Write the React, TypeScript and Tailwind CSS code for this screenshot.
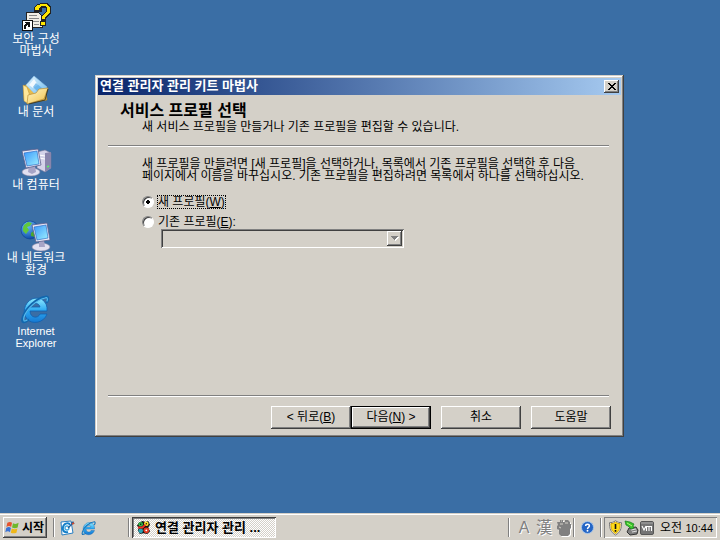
import { useState, type ReactNode } from "react";

const RAISED =
  "shadow-[inset_-1px_-1px_0_#404040,inset_1px_1px_0_#ffffff,inset_-2px_-2px_0_#808080]";

const App = () => {
  return (
    <div className="flex min-h-screen flex-col bg-[#3a6ea5] font-['Liberation_Sans','Noto_Sans_CJK_KR',sans-serif] text-xs leading-3 text-black">
      <main className="grid flex-1 grid-cols-[72px_1fr_72px]">
        <nav className="flex flex-col">
          <DesktopIcon icon={<SecurityIcon />}>
            보안 구성
            <br />
            마법사
          </DesktopIcon>
          <DesktopIcon icon={<FolderIcon />}>내 문서</DesktopIcon>
          <DesktopIcon icon={<ComputerIcon />}>내 컴퓨터</DesktopIcon>
          <DesktopIcon icon={<NetworkIcon />}>
            내 네트워크
            <br />
            환경
          </DesktopIcon>
          <DesktopIcon icon={<ExplorerIcon size={32} />}>
            <span className="text-[11px]">
              Internet
              <br />
              Explorer
            </span>
          </DesktopIcon>
        </nav>
        <div className="flex items-center justify-center pr-px pb-0.5">
          <WizardDialog />
        </div>
      </main>
      <Taskbar />
    </div>
  );
};

function DesktopIcon({ icon, children }: { icon: ReactNode; children: ReactNode }) {
  return (
    <a href="#" className="flex h-[73px] flex-col items-center pt-px text-center whitespace-nowrap text-white">
      {icon}
      <span>{children}</span>
    </a>
  );
}

function WizardDialog() {
  const [choice, setChoice] = useState("new");

  return (
    <section
      role="dialog"
      aria-labelledby="wizard-title"
      className="flex w-full max-w-[529px] flex-col bg-[#d4d0c8] p-[3px] shadow-[inset_-1px_-1px_0_#404040,inset_1px_1px_0_#d4d0c8,inset_-2px_-2px_0_#808080,inset_2px_2px_0_#ffffff]"
    >
      <header className="flex h-[17px] items-center justify-between bg-linear-to-r from-[#0a246a] to-[#a6caf0] px-0.5">
        <h1 id="wizard-title" className="text-[13px] font-bold text-white">
          연결 관리자 관리 키트 마법사
        </h1>
        <button
          aria-label="닫기"
          className={`flex h-[13px] w-[15px] items-center justify-center bg-[#d4d0c8] ${RAISED}`}
        >
          <svg width="8" height="7" viewBox="0 0 8 7" shapeRendering="crispEdges">
            <path
              d="M0 0h2v1h1v1h2V1h1V0h2v1H7v1H6v1H5v1h1v1h1v1h1v1H6V6H5V5H3v1H2v1H0V6h1V5h1V4h1V3H2V2H1V1H0z"
              fill="#000"
            />
          </svg>
        </button>
      </header>

      <div className="px-[10px] pt-2 pb-[5px]">
        <div className="px-3">
          <h2 className="text-base leading-4 font-bold">서비스 프로필 선택</h2>
          <p className="pt-0.5 pl-[22px]">새 서비스 프로필을 만들거나 기존 프로필을 편집할 수 있습니다.</p>
        </div>
        <hr className="mt-3 mr-0.5 border-t border-b border-t-[#808080] border-b-white" />

        <div className="min-h-[248px] pt-[11px] pl-[34px]">
          <p className="whitespace-nowrap">
            새 프로필을 만들려면 [새 프로필]을 선택하거나, 목록에서 기존 프로필을 선택한 후 다음
            <br />
            페이지에서 이름을 바꾸십시오. 기존 프로필을 편집하려면 목록에서 하나를 선택하십시오.
          </p>
          <div className="mt-[13px] flex flex-col gap-1.5">
            <RadioRow id="new" checked={choice === "new"} onSelect={setChoice}>
              새 프로필(<u>W</u>)
            </RadioRow>
            <RadioRow id="existing" checked={choice === "existing"} onSelect={setChoice}>
              기존 프로필(<u>E</u>):
            </RadioRow>
          </div>
          <div className="relative ml-[19px] h-[19px] w-[243px]">
            <select
              disabled={choice === "new"}
              aria-label="기존 프로필"
              className="h-full w-full appearance-none bg-[#d4d0c8] px-1 shadow-[inset_1px_1px_0_#808080,inset_-1px_-1px_0_#ffffff,inset_2px_2px_0_#404040,inset_-2px_-2px_0_#d4d0c8]"
            />
            <span
              className={`pointer-events-none absolute top-0.5 right-0.5 flex h-[15px] w-[15px] items-center justify-center bg-[#d4d0c8] ${RAISED}`}
            >
              <svg width="8" height="5" viewBox="0 0 8 5" shapeRendering="crispEdges">
                <path d="M1 1h7v1H7v1H6v1H5v1H4V4H3V3H2V2H1z" fill="#fff" />
                <path d="M0 0h7v1H6v1H5v1H4v1H3V3H2V2H1V1H0z" fill="#808080" />
              </svg>
            </span>
          </div>
        </div>

        <hr className="mr-0.5 border-t border-b border-t-[#808080] border-b-white" />
        <footer className="mt-[9px] flex justify-end gap-[10px]">
          <div className="flex">
            <WizardButton>
              &lt; 뒤로(<u>B</u>)
            </WizardButton>
            <WizardButton primary>
              다음(<u>N</u>) &gt;
            </WizardButton>
          </div>
          <WizardButton>취소</WizardButton>
          <WizardButton>도움말</WizardButton>
        </footer>
      </div>
    </section>
  );
}

function RadioRow({
  id,
  checked,
  onSelect,
  children,
}: {
  id: string;
  checked: boolean;
  onSelect: (id: string) => void;
  children: ReactNode;
}) {
  return (
    <div className="flex h-[14px] items-center gap-[3px]">
      <input
        type="radio"
        id={id}
        name="profile"
        checked={checked}
        onChange={() => onSelect(id)}
        className="h-3 w-3 appearance-none rounded-full border border-t-[#808080] border-r-white border-b-white border-l-[#808080] bg-white shadow-[inset_1px_1px_0_#404040] checked:bg-[radial-gradient(circle,#000_2px,#fff_2px)]"
      />
      <label
        htmlFor={id}
        className={`border border-dotted leading-3 ${checked ? "border-black" : "border-transparent"}`}
      >
        {children}
      </label>
    </div>
  );
}

function WizardButton({ primary, children }: { primary?: boolean; children: ReactNode }) {
  return (
    <button
      className={`h-[23px] w-20 bg-[#d4d0c8] pb-px whitespace-nowrap ${
        primary
          ? "shadow-[inset_0_0_0_1px_#000000,inset_-2px_-2px_0_#404040,inset_2px_2px_0_#ffffff,inset_-3px_-3px_0_#808080]"
          : RAISED
      }`}
    >
      {children}
    </button>
  );
}

function Taskbar() {
  return (
    <footer className="flex h-[27px] items-center bg-[#d4d0c8] px-[3px] pt-0.5 shadow-[inset_0_1px_0_#d4d0c8,inset_0_2px_0_#ffffff]">
      <button className={`flex h-[21px] w-11 items-center gap-0.5 pl-0.5 font-bold ${RAISED}`}>
        <WindowsFlag />
        <span className="whitespace-nowrap">시작</span>
      </button>
      <Grip className="ml-1.5" />
      <div className="ml-0.5 flex w-[67px] items-center gap-1.5">
        <button aria-label="Outlook Express">
          <OutlookIcon />
        </button>
        <button aria-label="Internet Explorer">
          <ExplorerIcon size={16} />
        </button>
      </div>
      <Grip />
      <button className="flex h-[21px] w-36 items-center gap-1 bg-[repeating-conic-gradient(#ffffff_0_25%,#d4d0c8_0_50%)] bg-[length:2px_2px] pl-1 text-[13px] font-bold whitespace-nowrap shadow-[inset_1px_1px_0_#404040,inset_-1px_-1px_0_#ffffff,inset_2px_2px_0_#808080]">
        <WizardIcon />
        연결 관리자 관리 ...
      </button>

      <div className="ml-auto flex items-center">
        <Grip />
        <div className="ml-1 flex items-center gap-1 text-[#808080]">
          <button className="w-4 text-base leading-5 [text-shadow:1px_1px_0_#fff]">A</button>
          <button className="w-4 text-base leading-5 [text-shadow:1px_1px_0_#fff]">漢</button>
          <button aria-label="IME 패드">
            <ImePadIcon />
          </button>
        </div>
        <Grip className="ml-px" />
        <button aria-label="도움말" className="mx-1">
          <HelpIcon />
        </button>
        <Grip />
        <div className="flex h-[21px] items-center pr-1 pl-1 shadow-[inset_1px_1px_0_#808080,inset_-1px_-1px_0_#ffffff]">
          <ShieldIcon />
          <UnplugIcon />
          <VmIcon />
          <time className="ml-1.5 whitespace-nowrap">
            오전 <span className="text-[11px]">10:44</span>
          </time>
        </div>
      </div>
    </footer>
  );
}

function Grip({ className = "" }: { className?: string }) {
  return <i className={`mx-0.5 h-[19px] w-0.5 border-r border-l border-r-white border-l-[#808080] ${className}`} />;
}

function SecurityIcon() {
  return (
    <svg width="32" height="32" viewBox="0 0 32 32" shapeRendering="crispEdges">
      <path d="M6 11h12l4 4v11H6z" fill="#f2efe6" stroke="#222" />
      <path d="M9 14h8M9 17h10M9 20h10M14 23h5" stroke="#888" />
      <path d="M14 11V6l3-3 5-1h5l4 3v7l-5 5v3h-5v-5l5-4V7h-4v4z" fill="#222" />
      <path d="M15 9V6l3-2 4-1h4l4 3v5l-5 5v2h-3v-3l5-4V6l-2-1h-4l-2 2v2z" fill="#ffe600" />
      <path d="M20 20h6v5h-6z" fill="#222" />
      <path d="M21 21h4v3h-4z" fill="#ffe600" />
      <path d="M2 19h10v10H2z" fill="#fff" stroke="#111" />
      <path d="M5 21h5v5H8v-2H7v1H6v3H4v-4h1v-1h1v-1H5z" fill="#111" />
    </svg>
  );
}

function FolderIcon() {
  return (
    <svg width="32" height="32" viewBox="0 0 32 32">
      <defs>
        <linearGradient id="folder" x1="0" y1="0" x2="1" y2="1">
          <stop offset="0" stopColor="#fff7c8" />
          <stop offset="1" stopColor="#f0c04a" />
        </linearGradient>
        <linearGradient id="sheet" x1="0" y1="0" x2="1" y2="1">
          <stop offset="0" stopColor="#e6f6ff" />
          <stop offset="1" stopColor="#62b5ed" />
        </linearGradient>
      </defs>
      <path d="M4 12l5-3 3 2 13 3 2 12-20 3-3-4z" fill="#e6bd50" stroke="#a67b21" strokeWidth=".7" />
      <path d="M14 2l13 11-8 11L6 11z" fill="url(#sheet)" stroke="#8fc4eb" strokeWidth=".6" />
      <path d="M14 5l4 6-5 3-4-3z" fill="#fff" opacity=".8" />
      <path d="M16 9l6 5-4 4-5-5z" fill="#55a9e8" opacity=".7" />
      <path d="M3 11l4 2 4 12-4 4-3-2z" fill="#ffe799" stroke="#b98e35" strokeWidth=".5" />
      <path d="M8 21l8-2 3-4 9-1-4 11-17 5z" fill="url(#folder)" stroke="#b98e35" strokeWidth=".7" />
      <path d="M28 15l-3 11-16 4" fill="none" stroke="#403718" strokeWidth=".9" />
    </svg>
  );
}

function ComputerIcon() {
  return (
    <svg width="32" height="32" viewBox="0 0 32 32">
      <defs>
        <linearGradient id="screen" x1="0" y1="0" x2="1" y2="1">
          <stop offset="0" stopColor="#3b98fb" />
          <stop offset="1" stopColor="#9cf0ff" />
        </linearGradient>
      </defs>
      <path d="M17 5l8-2 6 3v15l-6 4-8-4z" fill="#d4d3e9" stroke="#777595" strokeWidth=".6" />
      <path d="M25 6l6-1v16l-6 4z" fill="#8885ac" />
      <path d="M19 8l6 1M19 11l6 1" stroke="#fff" />
      <path d="M27 20l2-1" stroke="#56ef65" strokeWidth="1.500" />
      <ellipse cx="11" cy="25" rx="9" ry="4" fill="#e2e0f0" stroke="#8482a0" strokeWidth=".6" />
      <path d="M9 19h6l1 6-4 2-4-2z" fill="#a7a4c6" />
      <path d="M2 4l16-2 3 16-15 3z" fill="#e9e9f8" stroke="#5b608d" strokeWidth=".8" />
      <path d="M4 6l13-2 2 13-12 2z" fill="url(#screen)" stroke="#1d5fbd" strokeWidth=".6" />
    </svg>
  );
}

function NetworkIcon() {
  return (
    <svg width="32" height="32" viewBox="0 0 32 32">
      <defs>
        <radialGradient id="globe" cx=".35" cy=".25" r=".8">
          <stop offset="0" stopColor="#70bfff" />
          <stop offset="1" stopColor="#0846a3" />
        </radialGradient>
        <linearGradient id="netScreen" x1="0" y1="0" x2="1" y2="1">
          <stop offset="0" stopColor="#3b98fb" />
          <stop offset="1" stopColor="#9cf0ff" />
        </linearGradient>
      </defs>
      <circle cx="10" cy="10" r="9" fill="url(#globe)" stroke="#0a3f91" strokeWidth=".6" />
      <path d="M4 5l4-3 4 1-2 3-3 1 2 3-3 4-3-3v-3z" fill="#62c83b" />
      <path d="M11 13l4-3 3 3-3 4-4-1z" fill="#49a82f" />
      <ellipse cx="21" cy="27" rx="9" ry="4" fill="#e2e0f0" stroke="#8482a0" strokeWidth=".6" />
      <path d="M19 20h5l1 7h-6z" fill="#a7a4c6" />
      <path d="M12 5l15-2 3 17-14 2z" fill="#e9e9f8" stroke="#5b608d" strokeWidth=".8" />
      <path d="M14 7l12-2 2 13-11 2z" fill="url(#netScreen)" stroke="#1d5fbd" strokeWidth=".6" />
    </svg>
  );
}

function ExplorerIcon({ size }: { size: number }) {
  return (
    <svg width={size} height={size} viewBox="0 0 32 32">
      <defs>
        <linearGradient id="explorer" x1="0" y1="0" x2="0" y2="1">
          <stop offset="0" stopColor="#8eeaff" />
          <stop offset=".5" stopColor="#2eaaf2" />
          <stop offset="1" stopColor="#1578d2" />
        </linearGradient>
      </defs>
      <path
        d="M27 18H10c0 7 8 8 10 3h7c-3 9-15 11-20 5C2 20 4 10 12 6c8-3 16 2 15 12zM10 14h10c-1-5-9-5-10 0z"
        fill="url(#explorer)"
        fillRule="evenodd"
        stroke="#105faf"
        strokeWidth=".8"
      />
      <path
        d="M27 9c2-4 1-6-2-5C17 5 6 15 3 24c-2 6 1 6 5 3"
        fill="none"
        stroke="#1267ae"
        strokeWidth="2.500"
        strokeLinecap="round"
      />
      <path
        d="M27 8c1-3 0-4-2-3C17 7 7 15 4 24c-1 4 0 5 3 3"
        fill="none"
        stroke="#58bdf0"
        strokeWidth="1.200"
        strokeLinecap="round"
      />
    </svg>
  );
}

function WindowsFlag() {
  return (
    <svg width="15" height="15" viewBox="0 0 16 16">
      <path d="M2.500 3q3-2 5 0l-1 4.500q-2-2-5 0z" fill="#e6532c" />
      <path d="M8.500 3.500q3 1.500 6-.5l-1 5q-3 1.500-6 0z" fill="#6eb82a" />
      <path d="M1.300 8.500q3-2 5 0l-1 4.500q-2-2-5 0z" fill="#3972d5" />
      <path d="M7.200 9q3 1.500 6 0l-1 4.500q-3 1.500-6 0z" fill="#efb718" />
    </svg>
  );
}

function OutlookIcon() {
  return (
    <svg width="16" height="16" viewBox="0 0 16 16">
      <path d="M2 2l10-1 2 12-11 2z" fill="#fff" stroke="#287fc3" />
      <path d="M11 5c-1-3-6-2-7 2s2 6 5 5" fill="none" stroke="#1680c9" strokeWidth="2" />
      <circle cx="8" cy="8" r="2" fill="none" stroke="#42a8de" strokeWidth="1.300" />
      <path d="M9 8l5-5M12 3l2-1 1 2" fill="none" stroke="#285e98" strokeWidth="1.300" />
      <path d="M13 4l2-1" stroke="#d64a28" strokeWidth="1.500" />
    </svg>
  );
}

function WizardIcon() {
  return (
    <svg width="15" height="15" viewBox="0 0 16 16">
      <path d="M3 3l4-2 3 1 3-1 2 4-2 3 2 4-3 3-4-1-4 1-2-4 1-3-2-2z" fill="#111" />
      <circle cx="5" cy="4.500" r="2.500" fill="#31b84a" />
      <circle cx="11" cy="4" r="2.500" fill="#ffe12b" />
      <circle cx="5" cy="11.500" r="2.500" fill="#28a4b4" />
      <circle cx="11" cy="11" r="3" fill="#e33b23" />
      <circle cx="11" cy="11" r="1" fill="#fff" />
      <path d="M2 8h5l3-3" fill="none" stroke="#ef3425" strokeWidth="2" />
      <circle cx="5" cy="4.500" r=".8" fill="#111" />
      <circle cx="11" cy="4" r=".8" fill="#111" />
    </svg>
  );
}

function ImePadIcon() {
  return (
    <svg width="16" height="18" viewBox="0 0 16 18">
      <path
        d="M1 3h3V1h3v2h2V1h3l2 2v2h1v4l-1 1v5l-2 2H5l-2-2v-4l-2-1V7l1-1z"
        fill="#fff"
        transform="translate(1 1)"
      />
      <path d="M1 3h3V1h3v2h2V1h3l2 2v2h1v4l-1 1v5l-2 2H5l-2-2v-4l-2-1V7l1-1z" fill="#808080" />
      <path d="M4 5h3M9 4h3M3 8l2 1M5 2h1" stroke="#d4d0c8" />
    </svg>
  );
}

function HelpIcon() {
  return (
    <svg width="13" height="13" viewBox="0 0 14 14">
      <circle cx="7" cy="7" r="6.500" fill="#2465c5" stroke="#a8c7ec" />
      <path d="M5 5.500C5 3 9 3 9 5.500 9 7 7 6.800 7 8.500" fill="none" stroke="#fff" strokeWidth="1.600" />
      <circle cx="7" cy="10.500" r="1" fill="#fff" />
    </svg>
  );
}

function ShieldIcon() {
  return (
    <svg width="16" height="16" viewBox="0 0 16 16">
      <path d="M7.500.7c2 1.600 4 2 6 2 0 6-1 9.300-6 12.300-5-3-6-6.300-6-12.300 2 0 4-.4 6-2z" fill="#fff" stroke="#777" />
      <path d="M7.500 2.200c1.500 1 3 1.400 4.600 1.500 0 5-.8 7.500-4.600 9.800C3.700 11.200 2.900 8.700 2.900 3.700c1.600-.1 3.100-.5 4.600-1.500z" fill="#ffdb18" stroke="#d2a100" />
      <path d="M7.500 4v5M7.500 10v1.800" stroke="#111" strokeWidth="1.600" />
    </svg>
  );
}

function UnplugIcon() {
  return (
    <svg width="16" height="16" viewBox="0 0 16 16">
      <path d="M5 8l7-1 2 3-1 4-7 1-3-3z" fill="#808080" stroke="#333" />
      <path d="M7 10l5-1M8 12l5-1" stroke="#ddd" />
      <path d="M1 1l5 1 4 2-1 2 1 2-3 1-3-3-2-1z" fill="#38c52b" stroke="#187d18" strokeWidth=".7" />
      <path d="M3 3l5 3" stroke="#b6f17b" />
    </svg>
  );
}

function VmIcon() {
  return (
    <svg width="14" height="14" viewBox="0 0 14 14">
      <rect x=".5" y=".5" width="13" height="13" rx="1.500" fill="#747474" stroke="#555" />
      <path d="M1 2h12" stroke="#aaa" />
      <path d="M2 5l2 4 2-4M6.500 10V5.500h5V10M9 5.500V10" fill="none" stroke="#fff" strokeWidth="1.100" />
    </svg>
  );
}

export default App;
